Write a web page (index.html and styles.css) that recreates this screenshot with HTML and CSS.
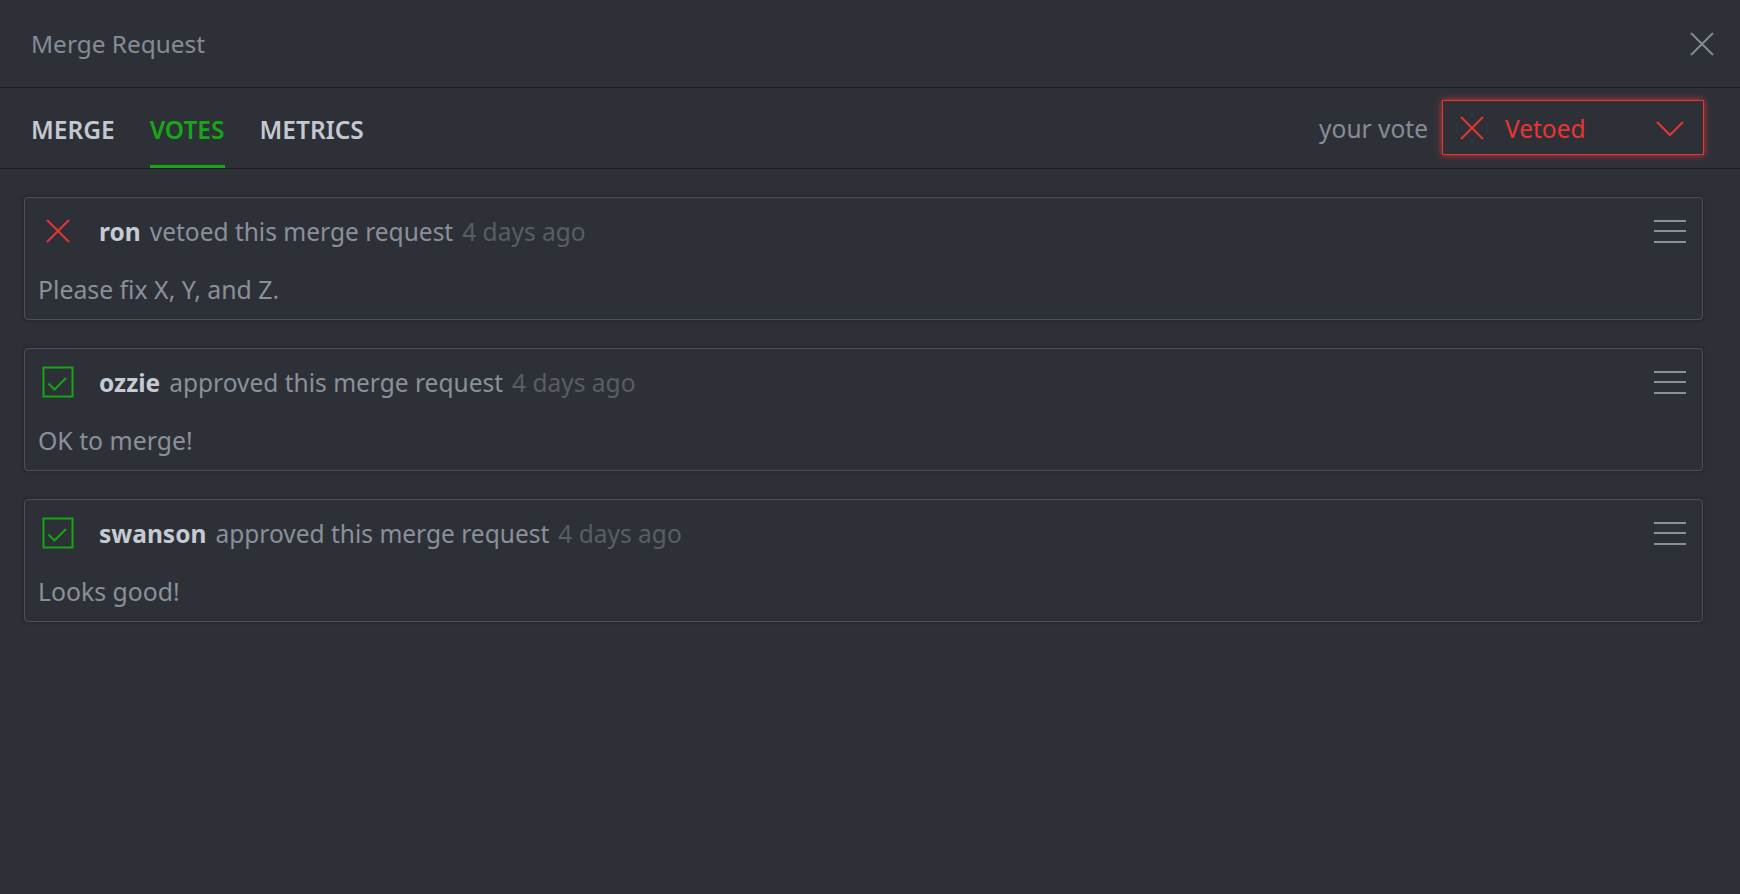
FILE: index.html
```html
<!DOCTYPE html>
<html lang="en">
<head>
<meta charset="utf-8">
<title>Merge Request</title>
<link rel="stylesheet" href="styles.css">
</head>
<body>
<div class="dialog">
  <header class="header">
    <div class="title">Merge Request</div>
    <button class="close" aria-label="Close">
      <svg width="24" height="24" viewBox="0 0 24 24"><path d="M1 1L23 23M23 1L1 23" stroke="#858a93" stroke-width="2" fill="none"/></svg>
    </button>
  </header>
  <nav class="tabs">
    <div class="tab">MERGE</div>
    <div class="tab active">VOTES</div>
    <div class="tab">METRICS</div>
    <div class="vote">
      <span class="vote-label">your vote</span>
      <div class="select">
        <svg class="select-icon" width="24" height="24" viewBox="0 0 24 24"><path d="M1 1L23 23M23 1L1 23" stroke="#e53535" stroke-width="2" fill="none"/></svg>
        <span class="select-text">Vetoed</span>
        <svg class="chevron" width="28" height="16" viewBox="0 0 28 16"><path d="M1 1L14 14L27 1" stroke="#e53535" stroke-width="2" fill="none"/></svg>
      </div>
    </div>
  </nav>
  <main class="list">
    <section class="card">
      <div class="card-head">
        <span class="icon-slot"><svg width="24" height="24" viewBox="0 0 24 24"><path d="M1 1L23 23M23 1L1 23" stroke="#e53535" stroke-width="2" fill="none"/></svg></span>
        <span class="name">ron</span>
        <span class="action">vetoed this merge request</span>
        <span class="time">4 days ago</span>
        <span class="menu"><i></i><i></i><i></i></span>
      </div>
      <div class="card-body">Please fix X, Y, and Z.</div>
    </section>
    <section class="card">
      <div class="card-head">
        <span class="icon-slot"><svg width="32" height="32" viewBox="0 0 32 32"><rect x="1.5" y="1.5" width="29" height="29" stroke="#14a514" stroke-width="2" fill="none"/><path d="M6.5 17.5L12.5 23.5L24 12" stroke="#14a514" stroke-width="2" fill="none"/></svg></span>
        <span class="name">ozzie</span>
        <span class="action">approved this merge request</span>
        <span class="time">4 days ago</span>
        <span class="menu"><i></i><i></i><i></i></span>
      </div>
      <div class="card-body">OK to merge!</div>
    </section>
    <section class="card">
      <div class="card-head">
        <span class="icon-slot"><svg width="32" height="32" viewBox="0 0 32 32"><rect x="1.5" y="1.5" width="29" height="29" stroke="#14a514" stroke-width="2" fill="none"/><path d="M6.5 17.5L12.5 23.5L24 12" stroke="#14a514" stroke-width="2" fill="none"/></svg></span>
        <span class="name">swanson</span>
        <span class="action">approved this merge request</span>
        <span class="time">4 days ago</span>
        <span class="menu"><i></i><i></i><i></i></span>
      </div>
      <div class="card-body">Looks good!</div>
    </section>
  </main>
</div>
</body>
</html>
```
FILE: styles.css
```css
* { box-sizing: border-box; }
html, body {
  margin: 0;
  height: 100%;
  background: #2e3038;
  font-family: "Noto Sans", "Open Sans", sans-serif;
  font-size: 24.5px;
  color: #8a9099;
}
.dialog { min-height: 100%; }
.header {
  display: flex;
  align-items: center;
  justify-content: space-between;
  height: 88px;
  padding: 0 26px 0 31px;
  border-bottom: 1px solid #1c1d22;
}
.title { color: #868c95; font-size: 24.4px; }
.close {
  background: none;
  border: 0;
  padding: 0;
  width: 24px;
  height: 24px;
  display: flex;
  margin-top: 1px;
}
.tabs {
  display: flex;
  align-items: stretch;
  height: 81px;
  padding: 0 36px 0 31px;
  border-bottom: 1px solid #1c1d22;
  gap: 35px;
}
.tab {
  display: flex;
  align-items: center;
  font-weight: 600;
  color: #c3c8d1;
  border-bottom: 3px solid transparent;
  padding-top: 5px;
  letter-spacing: 0;
}
.tab.active { color: #16a616; border-bottom-color: #16a616; }
.vote {
  margin-left: auto;
  display: flex;
  align-items: center;
  gap: 14px;
}
.vote-label { color: #868c95; padding-top: 1px; }
.select {
  display: flex;
  align-items: center;
  width: 262px;
  height: 55px;
  margin-top: -1px;
  border: 1.5px solid #e53535;
  box-shadow: 0 0 7px rgba(229, 53, 53, 0.9);
  padding: 0 19px 0 17px;
  color: #e53535;
}
.select-icon { flex: none; }
.select-text { margin-left: 21px; padding-top: 1px; }
.chevron { margin-left: auto; margin-top: 2px; }
.list {
  display: flex;
  flex-direction: column;
  gap: 28px;
  padding: 28px 37px 0 24px;
}
.card {
  border: 1px solid #4b4f58;
  border-radius: 4px;
  box-shadow: 0 0 4px rgba(0, 0, 0, 0.35);
  padding: 10px 16px 14px 13px;
}
.card-head {
  display: flex;
  align-items: center;
  height: 46px;
  white-space: pre;
  gap: 9px;
}
.icon-slot {
  width: 40px;
  display: flex;
  justify-content: center;
  margin-right: 12px;
}
.name { font-weight: 700; color: #c5cad3; }
.action { color: #8a9099; }
.time { color: #585d66; }
.menu {
  margin-left: auto;
  width: 32px;
  display: flex;
  flex-direction: column;
  gap: 8.5px;
}
.menu i {
  display: block;
  height: 2px;
  background: #8a9099;
}
.card-body {
  margin-top: 19px;
  line-height: 32px;
  font-size: 24.8px;
  color: #8a9099;
}
```
